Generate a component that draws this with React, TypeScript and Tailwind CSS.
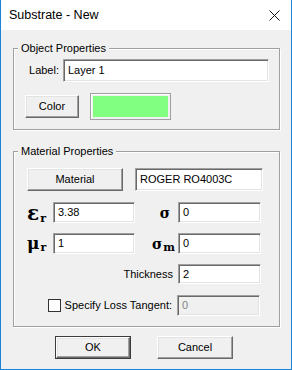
import React from "react";

const sunken =
  "border border-t-[#a0a0a0] border-l-[#a0a0a0] border-b-white border-r-white shadow-[inset_1px_1px_0_#696969,inset_-1px_-1px_0_#e3e3e3]";

const raised =
  "border border-t-white border-l-white border-b-[#696969] border-r-[#696969] shadow-[inset_-1px_-1px_0_#a0a0a0,inset_1px_1px_0_#e3e3e3] bg-[#f0f0f0]";

type FieldProps = {
  value: string;
  width: string;
  height?: string;
  disabled?: boolean;
};

const Field: React.FC<FieldProps> = ({ value, width, height = "h-[21px]", disabled }) => (
  <div
    className={`${sunken} ${width} ${height} flex items-center pl-[4px] text-[11px] ${
      disabled ? "bg-[#f0f0f0] text-[#838383]" : "bg-white text-black"
    }`}
  >
    {value}
  </div>
);

const Button: React.FC<{ label: string; width: string; isDefault?: boolean }> = ({
  label,
  width,
  isDefault,
}) => (
  <div
    className={`${width} h-[23px] flex items-center justify-center text-[11px] ${
      isDefault ? "border border-[#3c3c3c] bg-[#f0f0f0]" : ""
    }`}
  >
    <div className={`${raised} w-full h-full flex items-center justify-center`}>{label}</div>
  </div>
);

const Group: React.FC<{ title: string; className: string; children: React.ReactNode }> = ({
  title,
  className,
  children,
}) => (
  <div
    className={`relative ml-[12px] w-[267px] border border-[#a0a0a0] shadow-[inset_1px_1px_0_#fff,1px_1px_0_#fff] ${className}`}
  >
    {/* legend sits on the top border */}
    <span className="absolute left-[4px] top-[-8px] bg-[#f0f0f0] px-[3px] leading-[14px] text-[11px]">
      {title}
    </span>
    {children}
  </div>
);

const Symbol: React.FC<{ main: string; sub: string; size: string }> = ({ main, sub, size }) => (
  <span className="flex items-baseline font-bold leading-none" style={{ fontFamily: "'DejaVu Serif', serif" }}>
    <span className={size}>{main}</span>
    <span className="text-[11px] ml-[1px] translate-y-[2px]">{sub}</span>
  </span>
);

export default function App() {
  return (
    <div
      className="w-[292px] h-[370px] flex flex-col bg-[#f0f0f0] border-x border-b border-[#1883d7] text-black"
      style={{ fontFamily: "'Liberation Sans', Arial, sans-serif" }}
    >
      {/* Title bar */}
      <div className="h-[30px] bg-white flex items-center justify-between pl-[8px] pr-[10px] shrink-0">
        <span className="text-[12.5px]">Substrate - New</span>
        <svg width="11" height="11" viewBox="0 0 11 11" className="mr-[1px]">
          <path d="M0.5 0.5 L10.5 10.5 M10.5 0.5 L0.5 10.5" stroke="#111" strokeWidth="1" />
        </svg>
      </div>

      {/* Object Properties */}
      <Group title="Object Properties" className="mt-[18px] h-[82px] pt-[10px]">
        <div className="flex items-center">
          <span className="w-[49px] text-right text-[11px] pr-[4px]">Label:</span>
          <Field value="Layer 1" width="w-[206px]" height="h-[23px]" />
        </div>
        <div className="flex items-center mt-[11px] pl-[11px]">
          <Button label="Color" width="w-[54px]" />
          <div className="ml-[11px] w-[81px] h-[27px] border border-[#a0a0a0] bg-[#f0f0f0] p-[2px] shadow-[inset_1px_1px_0_#fff]">
            <div className="w-full h-full bg-[#80ff80]" />
          </div>
        </div>
      </Group>

      {/* Material Properties */}
      <Group title="Material Properties" className="mt-[21px] h-[176px] pt-[16px] pl-[13px]">
        <div className="flex items-center">
          <Button label="Material" width="w-[96px]" />
          <div className="ml-[12px]">
            <Field value="ROGER RO4003C" width="w-[128px]" height="h-[23px]" />
          </div>
        </div>

        <div className="flex items-center mt-[11px]">
          <div className="w-[26px] flex items-center">
            <Symbol main="ε" sub="r" size="text-[20px]" />
          </div>
          <Field value="3.38" width="w-[82px]" />
          <div className="w-[43px] flex justify-end pr-[8px]">
            <span className="font-bold text-[14px] leading-none" style={{ fontFamily: "'DejaVu Serif', serif" }}>
              σ
            </span>
          </div>
          <Field value="0" width="w-[83px]" />
        </div>

        <div className="flex items-center mt-[10px]">
          <div className="w-[26px] flex items-center">
            <Symbol main="μ" sub="r" size="text-[17px]" />
          </div>
          <Field value="1" width="w-[82px]" />
          <div className="w-[43px] flex justify-end pr-[3px]">
            <Symbol main="σ" sub="m" size="text-[14px]" />
          </div>
          <Field value="0" width="w-[83px]" />
        </div>

        <div className="flex items-center mt-[10px]">
          <span className="w-[151px] text-right text-[11px] pr-[5px]">Thickness</span>
          <Field value="2" width="w-[83px]" height="h-[20px]" />
        </div>

        <div className="flex items-center mt-[11px]">
          <div className="w-[150px] flex items-center justify-end pr-[5px]">
            <div className="w-[13px] h-[13px] border border-[#333] bg-white mr-[4px]" />
            <span className="text-[11px]">Specify Loss Tangent:</span>
          </div>
          <Field value="0" width="w-[83px]" disabled />
        </div>
      </Group>

      {/* Dialog buttons */}
      <div className="flex mt-[9px] pl-[54px]">
        <Button label="OK" width="w-[76px]" isDefault />
        <div className="ml-[26px]">
          <Button label="Cancel" width="w-[76px]" />
        </div>
      </div>
    </div>
  );
}
